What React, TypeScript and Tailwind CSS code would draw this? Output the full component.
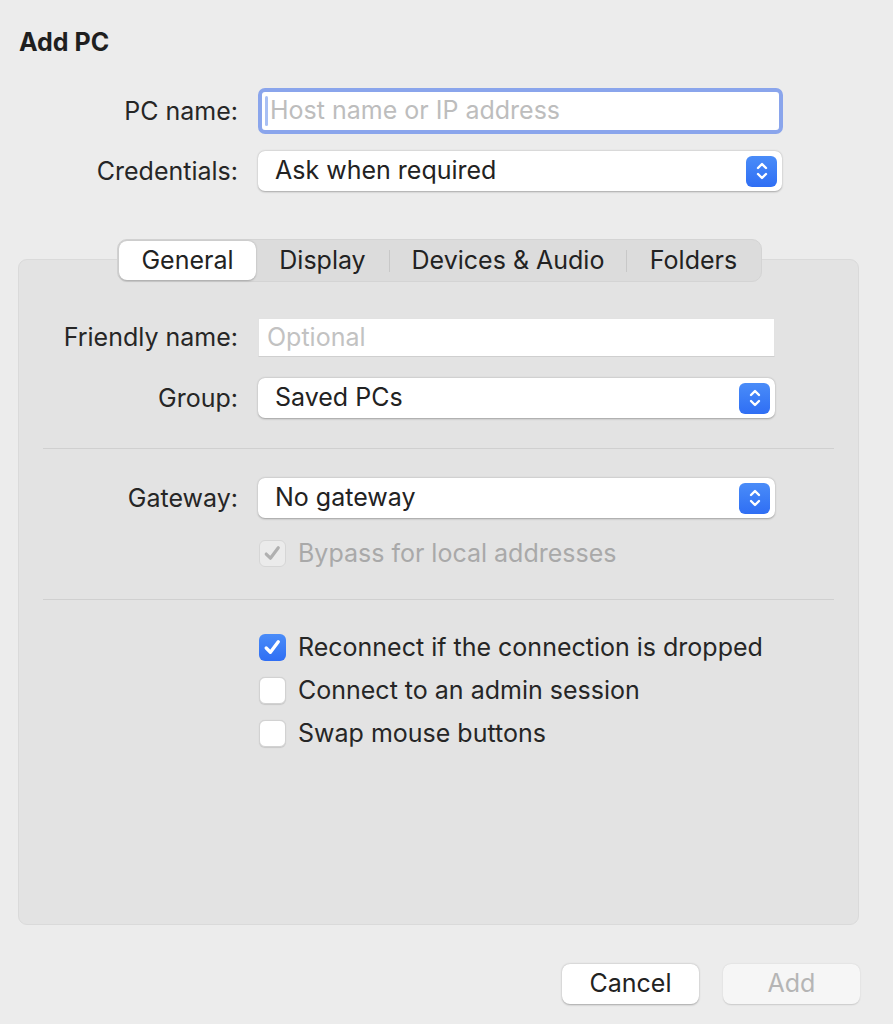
// App.tsx
// "Add PC" sheet from the Remote Desktop client — form rows, tab segment, options panel.

function Stepper() {
  return (
    <div className="w-[31px] h-[31px] rounded-[6px] bg-gradient-to-b from-[#4a8cf8] to-[#2f6ef4] flex items-center justify-center shrink-0">
      <svg width="14" height="22" viewBox="0 0 14 22" fill="none" stroke="white" strokeWidth="2.4" strokeLinecap="round" strokeLinejoin="round">
        <path d="M3 8 L7 4 L11 8" />
        <path d="M3 14 L7 18 L11 14" />
      </svg>
    </div>
  );
}

function Popup({ value, className = '' }: { value: string; className?: string }) {
  return (
    <div className={`h-[40px] bg-white rounded-[7px] shadow-[0_0.5px_2px_rgba(0,0,0,0.3)] flex items-center justify-between pl-[17px] pr-[5px] ${className}`}>
      <span className="text-[#222]">{value}</span>
      <Stepper />
    </div>
  );
}

function Check({ checked, disabled }: { checked?: boolean; disabled?: boolean }) {
  if (disabled) {
    return (
      <div className="w-[27px] h-[27px] rounded-[6px] bg-[#ebebeb] border border-[#d6d6d6] flex items-center justify-center shrink-0">
        <svg width="21" height="21" viewBox="0 0 20 20" fill="none" stroke="#b0b0b0" strokeWidth="3" strokeLinecap="round" strokeLinejoin="round">
          <path d="M4 10.5 L8 14.5 L15.5 4.5" />
        </svg>
      </div>
    );
  }
  if (checked) {
    return (
      <div className="w-[27px] h-[27px] rounded-[6px] bg-gradient-to-b from-[#4a8cf8] to-[#2f6ef4] flex items-center justify-center shrink-0">
        <svg width="21" height="21" viewBox="0 0 20 20" fill="none" stroke="white" strokeWidth="3.2" strokeLinecap="round" strokeLinejoin="round">
          <path d="M4 10.5 L8 14.5 L15.5 4.5" />
        </svg>
      </div>
    );
  }
  return (
    <div className="w-[27px] h-[27px] rounded-[6px] bg-white border border-[#d2d2d2] shadow-[0_0.5px_1px_rgba(0,0,0,0.12)] shrink-0" />
  );
}

function Label({ children }: { children: string }) {
  return <div className="text-right text-[#262626] leading-none">{children}</div>;
}

const tabs = [
  { name: 'General', w: 'w-[137px]' },
  { name: 'Display', w: 'w-[133px]' },
  { name: 'Devices & Audio', w: 'w-[237px]' },
  { name: 'Folders', w: 'w-[134px]' },
];

export default function App() {
  return (
    <div
      className="w-[893px] h-[1024px] bg-[#ececec] overflow-hidden text-[25px] text-[#262626]"
      style={{ fontFamily: 'Inter, "Noto Sans", sans-serif' }}
    >
      {/* Title */}
      <div className="pl-[19px] pt-[28px] leading-[28px] font-bold text-[#1f1f1f]">Add PC</div>

      {/* Top form */}
      <div className="grid grid-cols-[238px_525px] gap-x-[20px] items-center mt-[32px]">
        <Label>PC name:</Label>
        <div className="h-[46px] rounded-[7px] border-[4px] border-[#8aa5ec] bg-white flex items-center pl-[3px]">
          <div className="w-[3px] h-[30px] bg-[#a9c0f4] rounded-full mr-[2px]" />
          <span className="text-[#bdbdbd]">Host name or IP address</span>
        </div>
        <div className="h-[17px] col-span-2" />
        <Label>Credentials:</Label>
        <Popup value="Ask when required" className="w-[524px]" />
      </div>

      {/* Tabs + panel */}
      <div className="mt-[48px] pl-[18px] pr-[34px]">
        <div className="flex justify-center relative z-10 pl-[2px]">
          <div className="h-[43px] rounded-[10px] bg-[#dcdcdc] border border-[#d4d4d4] flex items-center px-px">
            {tabs.map((t, i) => (
              <div key={t.name} className={`flex items-center ${t.w} h-full`}>
                {i > 1 && <div className="w-px h-[22px] bg-[#c8c8c8]" />}
                {i === 0 ? (
                  <div className="flex-1 h-[39px] rounded-[8px] bg-white shadow-[0_0.5px_2px_rgba(0,0,0,0.25)] flex items-center justify-center text-[#222]">
                    {t.name}
                  </div>
                ) : (
                  <div className="flex-1 h-full flex items-center justify-center text-[#222]">{t.name}</div>
                )}
              </div>
            ))}
          </div>
        </div>

        <div className="-mt-[23px] h-[666px] rounded-[9px] bg-[#e3e3e3] border border-[#dadada] pt-[58px]">
          <div className="grid grid-cols-[219px_517px] gap-x-[20px] items-center">
            <Label>Friendly name:</Label>
            <div className="h-[39px] bg-white border border-[#e2e2e2] border-b-[#cfcfcf] flex items-center pl-[8px]">
              <span className="text-[#c2c2c2]">Optional</span>
            </div>
            <div className="h-[21px] col-span-2" />
            <Label>Group:</Label>
            <Popup value="Saved PCs" />
          </div>

          <div className="mx-[24px] mt-[30px] h-px bg-[#d0d0d0]" />

          <div className="grid grid-cols-[219px_517px] gap-x-[20px] items-center mt-[29px]">
            <Label>Gateway:</Label>
            <Popup value="No gateway" />
            <div className="h-[22px] col-span-2" />
            <div />
            <div className="flex items-center gap-[12px] h-[27px] pl-px">
              <Check disabled />
              <span className="text-[#a9a9a9]">Bypass for local addresses</span>
            </div>
          </div>

          <div className="mx-[24px] mt-[32px] h-px bg-[#d0d0d0]" />

          <div className="pl-[240px] mt-[34px] flex flex-col gap-[16px]">
            <div className="flex items-center gap-[12px] h-[27px]">
              <Check checked />
              <span className="text-[#262626]">Reconnect if the connection is dropped</span>
            </div>
            <div className="flex items-center gap-[12px] h-[27px]">
              <Check />
              <span className="text-[#262626]">Connect to an admin session</span>
            </div>
            <div className="flex items-center gap-[12px] h-[27px]">
              <Check />
              <span className="text-[#262626]">Swap mouse buttons</span>
            </div>
          </div>
        </div>
      </div>

      {/* Buttons */}
      <div className="flex justify-end gap-[24px] pr-[33px] mt-[39px]">
        <div className="w-[137px] h-[40px] rounded-[8px] bg-white shadow-[0_0.5px_2px_rgba(0,0,0,0.3)] flex items-center justify-center text-[#222]">
          Cancel
        </div>
        <div className="w-[137px] h-[40px] rounded-[8px] bg-[#f6f6f6] shadow-[0_0.5px_1.5px_rgba(0,0,0,0.15)] flex items-center justify-center text-[#b5b5b5]">
          Add
        </div>
      </div>
    </div>
  );
}
